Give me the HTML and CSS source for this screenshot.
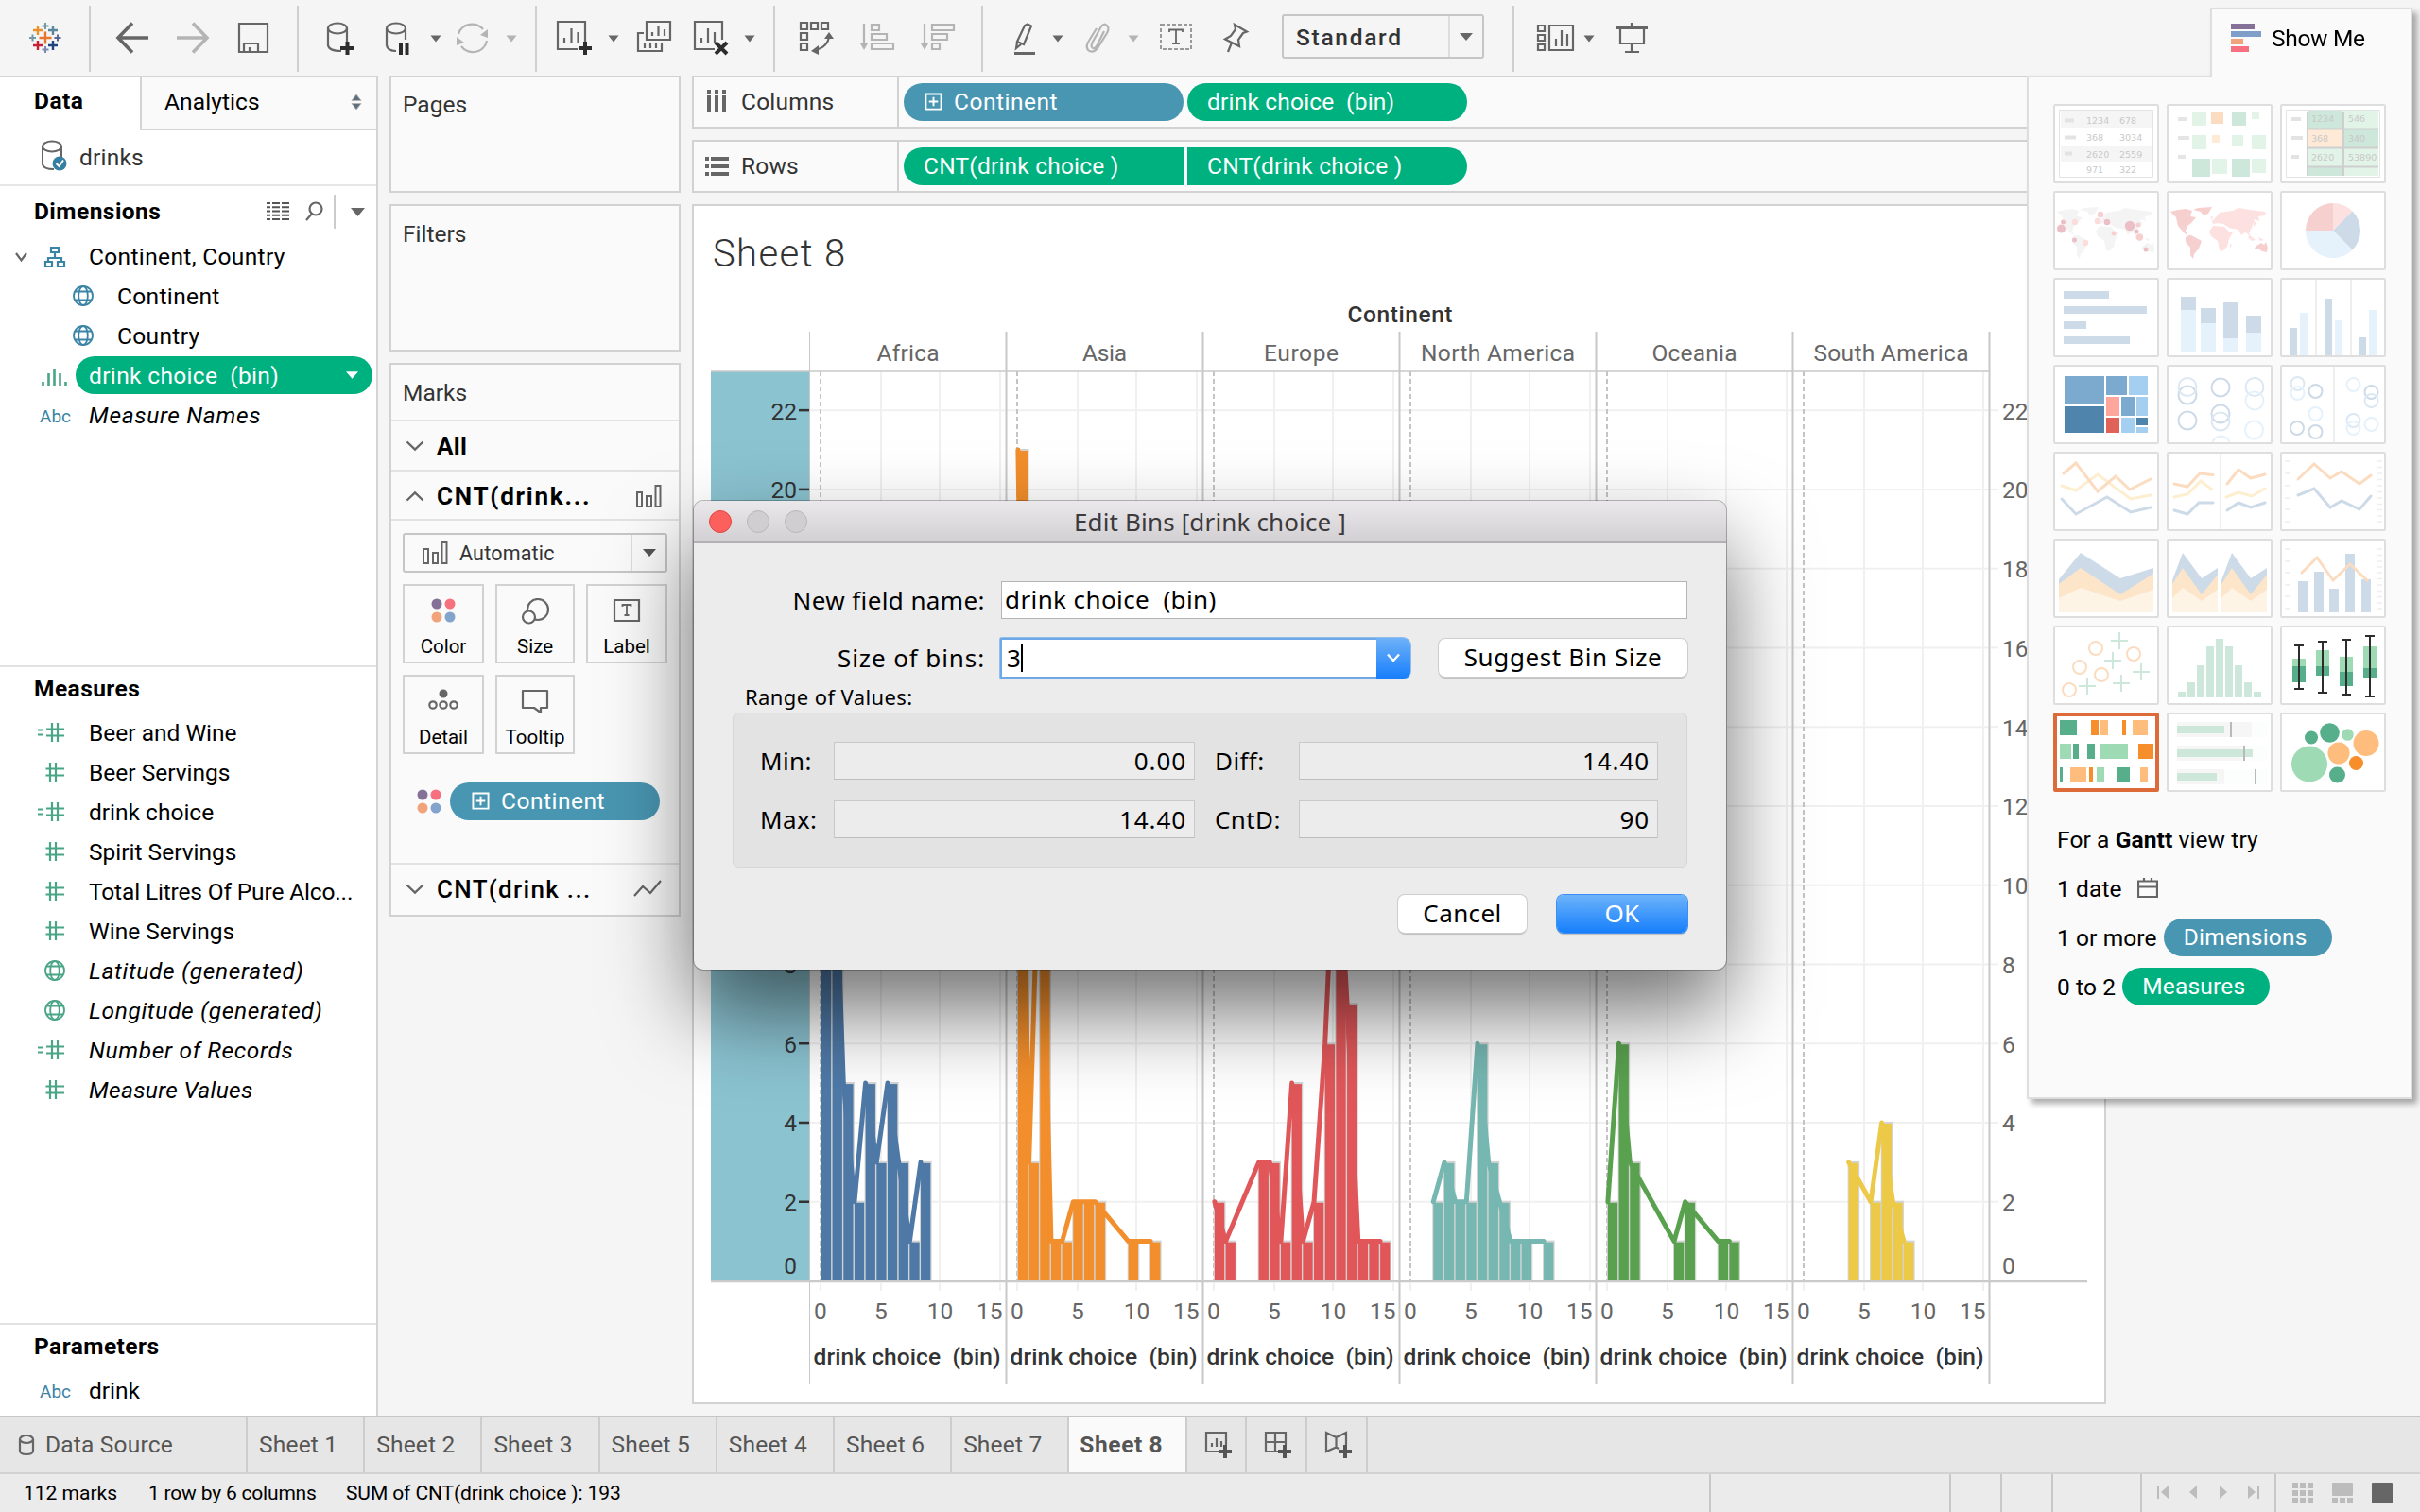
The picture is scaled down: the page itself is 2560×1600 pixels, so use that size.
FILE: index.html
```html
<!DOCTYPE html>
<html lang="en">
<head>
<meta charset="utf-8">
<title>Sheet 8</title>
<link rel="stylesheet" href="styles.css">
</head>
<body>
<svg class="defs" width="0" height="0">
  <defs>
    <symbol id="i-hash" viewBox="0 0 30 24"><path d="M13 2V22M19 2V22M8.500 8.500H28M8.500 15.500H28" fill="none" stroke="#4aa586" stroke-width="2.200"/></symbol>
    <symbol id="i-chash" viewBox="0 0 30 24"><path d="M15 2V22M21 2V22M9 8.500H28M9 15.500H28M0 9.500H6M0 14.500H6" fill="none" stroke="#4aa586" stroke-width="2.200"/></symbol>
    <symbol id="i-globe" viewBox="0 0 24 24"><g fill="none" stroke="currentColor" stroke-width="1.800"><circle cx="12" cy="12" r="10"/><ellipse cx="12" cy="12" rx="4.800" ry="10"/><path d="M3.500 7.500H20.500M3.500 16.500H20.500"/></g></symbol>
    <symbol id="i-plusbox" viewBox="0 0 20 20"><path d="M1.500 1.500H18.500V18.500H1.500ZM10 5V15M5 10H15" fill="none" stroke="#fff" stroke-width="2"/></symbol>
    <symbol id="i-colors" viewBox="0 0 26 26"><circle cx="6" cy="6" r="5.500" fill="#857098"/><circle cx="20" cy="6" r="5.500" fill="#f7707f"/><circle cx="6" cy="20" r="5.500" fill="#f1a47b"/><circle cx="20" cy="20" r="5.500" fill="#82a4cc"/></symbol>
    <symbol id="i-bars" viewBox="0 0 28 26"><path d="M2 9H7V24H2ZM12 13H17V24H12ZM21.500 2H26.500V24H21.500Z" fill="none" stroke="#666" stroke-width="2"/></symbol>
    <symbol id="i-down" viewBox="0 0 20 12"><path d="M1.500 1.500L10 9.500L18.500 1.500" fill="none" stroke="#666" stroke-width="2.400"/></symbol>
    <symbol id="i-tri" viewBox="0 0 14 8"><path d="M0 0H14L7 8Z" fill="currentColor"/></symbol>
    <symbol id="i-db" viewBox="0 0 26 36"><path d="M2 7V26Q3 31 14 31M22 7V22" fill="none" stroke="#666" stroke-width="2"/><ellipse cx="12" cy="7" rx="10" ry="5.500" fill="none" stroke="#666" stroke-width="2"/></symbol>
  </defs>
</svg>

<header class="toolbar">
  <svg class="tb sep" width="96" height="80" viewBox="0 0 96 80">
    <g fill="none" stroke-width="2">
      <path stroke="#7199a6" d="M48 24V31M44.500 27.500H51.500M34.500 36.500V43.500M31 40H38"/>
      <path stroke="#eb912b" stroke-width="2.400" d="M40 27V37M35 32H45"/>
      <path stroke="#59879b" stroke-width="2.400" d="M56 27V37M51 32H61"/>
      <path stroke="#e8762c" stroke-width="2.400" d="M48 33.500V46.500M41.500 40H54.500"/>
      <path stroke="#5b6591" d="M61 36.500V43.500M57.500 40H64.500"/>
      <path stroke="#c72035" stroke-width="2.400" d="M40 43V53M35 48H45"/>
      <path stroke="#1f457e" stroke-width="2.400" d="M56 43V53M51 48H61"/>
      <path stroke="#7c87b3" d="M48 49V56M44.500 52.500H51.500"/>
    </g>
  </svg>
  <svg class="tb sep" width="220" height="80" viewBox="96 0 220 80">
    <path class="ln4" d="M157 40H126M140 24.500L125 40L140 55.500"/>
    <path class="ln4 off" d="M187 40H218M204 24.500L219 40L204 55.500"/>
    <path class="ln" d="M253 25H283V55H253ZM258 55V46H273V55M264 55V50"/>
  </svg>
  <svg class="tb sep" width="252" height="80" viewBox="316 0 252 80">
    <ellipse class="ln" cx="357" cy="30" rx="10" ry="5.500"/><path class="ln" d="M347 30V48Q348 54 361 54M367 30V44"/><path class="blk" d="M367.500 44V58M360 51H375"/>
    <ellipse class="ln" cx="419" cy="30" rx="10" ry="5.500"/><path class="ln" d="M409 30V48Q410 54 419 54M429 30V42"/><path class="blk" d="M424 45V58M430.500 45V58"/>
    <path class="tri" d="M455.500 37.500H466.500L461 44.500Z"/>
    <path class="ln off" d="M485 36A15 14.500 0 0 1 511 31M515 43A15 14.500 0 0 1 488 49"/><path class="trioff" d="M508 37L516 31V40ZM483 39L491 45L483 48ZM535.500 37.500H546.500L541 44.500Z"/>
  </svg>
  <svg class="tb sep" width="252" height="80" viewBox="568 0 252 80">
    <path class="ln" d="M611 52H590V23H619V44M597 40V46M604.500 30V46M611.500 34V46"/><path class="blk" d="M619 44V58M612 51H626"/>
    <path class="tri" d="M643.500 37.500H654.500L649 44.500Z"/>
    <path class="ln" d="M684 23H709V42H684ZM690 34V38M696.500 28V38M703 31V38M681 35H675V54H700V46M682 46V51M688 46V51M694 46V51"/>
    <path class="ln" d="M756 52H735V23H764V42M742 40V46M749 30V46M756 34V46"/><path class="blk" d="M757 45L769 57M769 45L757 57"/>
    <path class="tri" d="M787.500 37.500H798.500L793 44.500Z"/>
  </svg>
  <svg class="tb sep" width="220" height="80" viewBox="820 0 220 80">
    <path class="ln" d="M847 24H854V31H847ZM858 24H865V31H858ZM869 24H876V31H869ZM847 35H854V42H847ZM847 46H854V53H847ZM862 53Q876 50 877 38"/><path class="tri" d="M872 41L877 34L882 41ZM866 48L858 54L866 58Z"/>
    <path class="ln off" d="M914 25V49M922 26H930V32H922ZM922 36H938V42H922ZM922 46H945V52H922Z"/><path class="trioff" d="M910 46H918L914 53Z"/>
    <path class="ln off" d="M978 25V49M986 26H1009V32H986ZM986 36H1002V42H986ZM986 46H994V52H986Z"/><path class="trioff" d="M974 46H982L978 53Z"/>
  </svg>
  <svg class="tb" width="316" height="80" viewBox="1040 0 316 80">
    <path class="ln" d="M1087 25.500L1091 27.500L1083 47L1076 44L1084 27ZM1076 45L1075 51L1080 47"/><path class="tri" d="M1073 55H1095V58H1073ZM1113.500 37.500H1124.500L1119 44.500Z"/>
    <path class="ln off" d="M1168 33L1160 49Q1157 53 1155 50Q1154 48 1156 44L1165 28Q1168 24 1171 27Q1174 30 1171 35L1161 51Q1156 57 1151 53Q1148 49 1152 43L1160 30"/><path class="trioff" d="M1193.500 37.500H1204.500L1199 44.500Z"/>
    <rect x="1228" y="26" width="32" height="26" fill="none" stroke="#999" stroke-width="2" stroke-dasharray="4 2"/><path class="ln s" d="M1237 34V31.500H1251V34M1244 31.500V46M1240 46H1248"/>
    <path class="ln" d="M1306 26L1319 33.500L1315 35L1310 42L1311 49L1296 41.500L1302 38L1307 31ZM1303 45L1299 55"/>
  </svg>
  <div class="fit"><span class="fit-t">Standard</span><span class="fit-a"><svg width="14" height="8"><use href="#i-tri"/></svg></span></div>
  <i class="vline"></i>
  <svg class="tb" width="158" height="80" viewBox="1602 0 158 80">
    <path class="ln" d="M1627 27H1634V33H1627ZM1627 37H1634V43H1627ZM1627 47H1634V53H1627ZM1639 27H1664V53H1639ZM1646 41V49M1652 32V49M1658 36V49"/>
    <path class="tri" d="M1675.500 37.500H1686.500L1681 44.500ZM1709 27H1743V31H1709Z"/>
    <path class="ln" d="M1714 31V46H1739V31M1726 24V28M1726 46V55M1719 55H1734"/>
  </svg>
</header>

<main class="main">
  <aside class="data">
    <div class="dtabs"><div class="dtab on">Data</div><div class="dtab off"><span>Analytics</span><svg width="12" height="16"><path d="M1 6.500H11L6 0ZM1 9.500H11L6 16Z" fill="#5c7080"/></svg></div></div>
    <div class="source">
      <svg width="30" height="36" viewBox="0 0 30 36"><use href="#i-db" width="26" height="36"/><circle cx="20" cy="25" r="7.500" fill="#357fa0"/><path d="M16.500 25L19.500 28L24 21.500" stroke="#fff" stroke-width="2" fill="none"/></svg>
      <span>drinks</span>
    </div>
    <section class="dims">
      <div class="shead"><b>Dimensions</b>
        <svg width="130" height="40" viewBox="270 204 130 40"><path d="M282 215H306M282 219.300H306M282 223.500H306M282 227.800H306M282 232H306" stroke="#555" stroke-width="2" stroke-dasharray="4 2 8 2 8 9"/><circle cx="334" cy="221" r="6.500" class="ln"/><path class="ln" d="M330 226L324 233"/><path d="M354 206V242" stroke="#ccc" stroke-width="2"/><path class="tri" d="M371 220H386L378.500 229Z"/></svg>
      </div>
      <div class="row"><svg class="ic" width="94" height="42" viewBox="0 251 94 42"><path class="ln" d="M17 269L22.500 276.500L28 269"/><path d="M54 263H62V268H54ZM58 268V274M51 278V274H65V278M48 278H55V283H48ZM61 278H68V283H61Z" fill="none" stroke="#3a84a5" stroke-width="2.200"/></svg><span>Continent, Country</span></div>
      <div class="row in"><svg class="ic globe" width="24" height="24"><use href="#i-globe"/></svg><span>Continent</span></div>
      <div class="row in"><svg class="ic globe" width="24" height="24"><use href="#i-globe"/></svg><span>Country</span></div>
      <div class="row sel"><svg class="ic" width="80" height="42" viewBox="0 0 80 42"><path d="M45.500 28V32M51.500 19V32M57.500 14V32M63.500 19V32M69.500 28V32" stroke="#4aa586" stroke-width="2.600"/></svg><div class="pill g selpill"><span>drink choice  (bin)</span><svg width="13" height="8"><use href="#i-tri"/></svg></div></div>
      <div class="row"><span class="abc">Abc</span><em>Measure Names</em></div>
    </section>
    <section class="meas">
      <div class="shead"><b>Measures</b></div>
      <div class="row"><svg class="mi" width="30" height="24"><use href="#i-chash"/></svg><span>Beer and Wine</span></div>
      <div class="row"><svg class="mi" width="30" height="24"><use href="#i-hash"/></svg><span>Beer Servings</span></div>
      <div class="row"><svg class="mi" width="30" height="24"><use href="#i-chash"/></svg><span>drink choice</span></div>
      <div class="row"><svg class="mi" width="30" height="24"><use href="#i-hash"/></svg><span>Spirit Servings</span></div>
      <div class="row"><svg class="mi" width="30" height="24"><use href="#i-hash"/></svg><span class="tight">Total Litres Of Pure Alco...</span></div>
      <div class="row"><svg class="mi" width="30" height="24"><use href="#i-hash"/></svg><span>Wine Servings</span></div>
      <div class="row"><svg class="mi gg" width="24" height="24"><use href="#i-globe"/></svg><em>Latitude (generated)</em></div>
      <div class="row"><svg class="mi gg" width="24" height="24"><use href="#i-globe"/></svg><em>Longitude (generated)</em></div>
      <div class="row"><svg class="mi" width="30" height="24"><use href="#i-chash"/></svg><em>Number of Records</em></div>
      <div class="row"><svg class="mi" width="30" height="24"><use href="#i-hash"/></svg><em class="mv">Measure Values</em></div>
    </section>
    <section class="params">
      <div class="shead"><b>Parameters</b></div>
      <div class="row"><span class="abc">Abc</span><span>drink</span></div>
    </section>
  </aside>

  <div class="cards">
    <div class="card pages">Pages</div>
    <div class="card filters">Filters</div>
    <div class="card marks">
      <div class="m-title">Marks</div>
      <div class="m-row all"><svg width="20" height="12"><use href="#i-down"/></svg><b>All</b></div>
      <div class="m-row one"><svg class="flip" width="20" height="12"><use href="#i-down"/></svg><b>CNT(drink...</b><svg class="kind" width="28" height="26"><use href="#i-bars"/></svg></div>
      <div class="m-body">
        <div class="auto"><svg width="28" height="26"><use href="#i-bars"/></svg><span>Automatic</span><i><svg width="14" height="8"><use href="#i-tri"/></svg></i></div>
        <div class="btns">
          <div class="btn"><svg width="26" height="26"><use href="#i-colors"/></svg>Color</div>
          <div class="btn"><svg width="30" height="28" viewBox="0 0 30 28"><circle class="ln" cx="18" cy="12" r="11"/><circle class="ln" cx="8.500" cy="20" r="6.500" style="fill:#fafafa"/></svg>Size</div>
          <div class="btn"><svg width="30" height="26" viewBox="0 0 30 26"><path class="ln" d="M2 2H28V24H2Z"/><path class="ln s" d="M10.500 9V7H19.500V9M15 7V18M12.500 18H17.500"/></svg>Label</div>
          <div class="btn"><svg width="32" height="22" viewBox="0 0 32 22"><circle cx="16" cy="5" r="4.500" fill="#666"/><circle class="ln" cx="5" cy="17" r="3.700"/><circle class="ln" cx="16" cy="17" r="3.700"/><circle class="ln" cx="27" cy="17" r="3.700"/></svg>Detail</div>
          <div class="btn"><svg width="30" height="28" viewBox="0 0 30 28"><path class="ln" d="M2 2H28V20H21V25L14 20H2Z" stroke-linejoin="round"/></svg>Tooltip</div>
        </div>
        <div class="enc"><svg width="26" height="26"><use href="#i-colors"/></svg><div class="pill b"><svg width="19" height="19"><use href="#i-plusbox"/></svg><span>Continent</span></div></div>
      </div>
      <div class="m-row last"><svg width="20" height="12"><use href="#i-down"/></svg><b>CNT(drink ...</b><svg class="kind" width="30" height="20" viewBox="0 0 30 20"><path class="ln" d="M1 17L10 7L18 14L29 1"/></svg></div>
    </div>
  </div>

  <div class="work">
    <div class="shelf"><div class="sh-name"><svg width="24" height="26"><path d="M4 0V4M12 0V4M20 0V4M4 6V24M12 6V24M20 6V24" stroke="#666" stroke-width="4"/></svg><span>Columns</span></div><div class="pills"><div class="pill b"><svg width="19" height="19"><use href="#i-plusbox"/></svg><span>Continent</span></div><div class="pill g"><span>drink choice  (bin)</span></div></div></div>
    <div class="shelf"><div class="sh-name"><svg width="26" height="22"><path d="M0 3H4M0 11H4M0 19H4M6 3H25M6 11H25M6 19H25" stroke="#666" stroke-width="4"/></svg><span>Rows</span></div><div class="pills"><div class="pill g sqr"><span>CNT(drink choice )</span></div><div class="pill g sql"><span>CNT(drink choice )</span></div></div></div>
    <div class="view"><h1>Sheet 8</h1><svg id="chart" width="1492" height="1164" viewBox="734 320 1492 1164"></svg></div>
  </div>
</main>

<nav class="tabs">
  <div class="tab ds"><svg width="18" height="24" viewBox="0 0 18 24"><path class="ln" d="M2 6V18Q2 22 9 22Q16 22 16 18V6"/><ellipse class="ln" cx="9" cy="6" rx="7" ry="4"/></svg>Data Source</div>
  <div class="tab">Sheet 1</div><div class="tab">Sheet 2</div><div class="tab">Sheet 3</div><div class="tab">Sheet 5</div><div class="tab">Sheet 4</div><div class="tab">Sheet 6</div><div class="tab">Sheet 7</div><div class="tab cur">Sheet 8</div>
  <div class="tab new"><svg width="30" height="32" viewBox="0 0 30 32"><path class="ln" d="M16 23H2V3H23V16M8 14V18M13 9V18M18 12V18"/><path d="M22 16V30M15 23H29" stroke="#555" stroke-width="4"/></svg></div>
  <div class="tab new"><svg width="30" height="32" viewBox="0 0 30 32"><path class="ln" d="M16 23H2V3H23V16M2 13H23M12 3V23"/><path d="M22 16V30M15 23H29" stroke="#555" stroke-width="4"/></svg></div>
  <div class="tab new"><svg width="30" height="32" viewBox="0 0 30 32"><path class="ln" d="M15 20L12.500 18.500L2 23V3L12.500 8L23 3V16M12.500 8V19"/><path d="M22 16V30M15 23H29" stroke="#555" stroke-width="4"/></svg></div>
</nav>
<footer class="status">
  <span class="s1">112 marks</span><span class="s2">1 row by 6 columns</span><span class="s3">SUM of CNT(drink choice ): 193</span>
  <svg width="754" height="40" viewBox="1806 1560 754 40"><path d="M1809 1560V1600M2063 1560V1600M2117 1560V1600M2171 1560V1600M2265 1560V1600M2407 1560V1600" stroke="#c8c8c8" stroke-width="2"/><path fill="#bcbcbc" d="M2282 1572H2284V1586H2282ZM2294 1572V1586L2286 1579ZM2324 1572V1586L2316 1579ZM2348 1572V1586L2356 1579ZM2378 1572V1586L2386 1579ZM2388 1572H2390V1586H2388Z"/><path d="M2425 1572H2431M2433 1572H2439M2441 1572H2447M2425 1580H2431M2433 1580H2439M2441 1580H2447M2425 1588H2431M2433 1588H2439M2441 1588H2447M2467 1588H2473M2475 1588H2481M2483 1588H2489" stroke="#bcbcbc" stroke-width="6"/><rect x="2467" y="1569" width="22" height="14" rx="1" fill="#bcbcbc"/><rect x="2509" y="1569" width="22" height="22" rx="1" fill="#666"/></svg>
</footer>

<section class="showme">
  <div class="sm-tab"><svg width="32" height="30"><path fill="#857098" d="M0 0H25V6H0Z"/><path fill="#7f9fca" d="M0 8H32V14H0Z"/><path fill="#f1a47b" d="M0 16H13V22H0Z"/><path fill="#f7707f" d="M0 24H19V30H0Z"/></svg><span>Show Me</span></div>
  <div class="sm-body">
    <div class="thumbs">
      <svg class="th"><path fill="#f5f5f5" d="M8 7H104V25H8ZM8 44H104V61H8Z"/><path fill="none" stroke="#e3e3e3" d="M6.500 6.500H105.500V77.500H6.500Z"/><path stroke="#e3e3e3" stroke-width="4" d="M12 17.500H22M12 35.500H24M12 52.500H20"/><g class="tt"><text x="35" y="20.500">1234</text><text x="70" y="20.500">678</text><text x="35" y="38.500">368</text><text x="70" y="38.500">3034</text><text x="35" y="56.500">2620</text><text x="70" y="56.500">2559</text><text x="35" y="72.500">971</text><text x="70" y="72.500">322</text></g></svg>
      <svg class="th"><path stroke="#e5e5e5" stroke-width="4" d="M12 16H22M12 36H24M12 56H20"/><path fill="#e2f3e8" d="M27 8H42V23H27ZM90 8H98V16H90ZM27 33H42V48H27ZM69 33H81V45H69ZM90 33H105V48H90ZM48 58H64V74H48ZM90 58H105V73H90Z"/><path fill="#cde7da" d="M69 8H84V23H69ZM27 58H46V77H27ZM69 58H88V77H69Z"/><path fill="#fbdcc0" d="M47 8H60V21H47Z"/><path fill="#feead6" d="M48 33H56V41H48Z"/></svg>
      <svg class="th"><path fill="none" stroke="#e3e3e3" d="M6.500 6.500H105.500V77.500H6.500Z"/><path stroke="#e3e3e3" stroke-width="4" d="M12 16H22M12 36H24M12 56H20"/><path fill="#e2f3e8" d="M29 7H104V76H29Z"/><path fill="#cde7da" d="M29 7H66V26H29ZM67 27H104V46H67ZM29 67H66V76H29Z"/><path fill="#feead6" d="M29 27H66V46H29Z"/><path stroke="#cfcfcf" stroke-width="2" d="M29 8V76M67 8V76M29 26.500H104M29 46.500H104M29 66.500H104"/><g class="tt"><text x="33" y="19">1234</text><text x="72" y="19">546</text><text x="33" y="40">368</text><text x="72" y="40">340</text><text x="33" y="60">2620</text><text x="72" y="60">53890</text></g></svg>
      <svg class="th"><g fill="#f4f4f4"><path id="na" d="M4 22L12 20L20 19L27 21L25 27L31 28L26 34L22 37L20 42L22 47L28 48L24 49L18 44L12 37L10 28ZM33 18L48 17L44 24L39 26L36 22L28 20Z"/><path id="sa" d="M20 49L26 47L37 53L34 61L29 67L28 72L25 68L25 60L20 54Z"/><path id="ea" d="M48 32L52 28L56 23L62 22L70 21L76 18L88 20L104 22L105 26L97 27L98 32L93 30L91 36L89 41L87 44L89 49L84 44L81 45L79 47L76 41L71 40L66 39L60 35L54 34L49 35ZM92 32L95 34L92 38ZM88 47L94 52L90 53L86 49ZM97 49L103 52L99 53ZM46 28L49 27L48 31Z"/><path id="af" d="M45 43L49 37L61 38L66 43L70 44L66 51L64 59L59 64L56 63L54 53L47 48ZM67 56L69 57L67 61Z"/><path id="au" d="M92 62L95 58L100 55L103 57L105 54L107 60L106 65L101 64L98 62Z"/></g><g fill="#ebbfc5"><circle cx="8.500" cy="40" r="4.500"/><circle cx="10.500" cy="33" r="2.500"/><circle cx="57" cy="33" r="3.300"/><circle cx="81" cy="37" r="5.200"/><circle cx="22.500" cy="52" r="2.500"/><circle cx="88" cy="43" r="2.500"/><circle cx="98" cy="62" r="2.500"/></g><g fill="#f7cfcf"><circle cx="50" cy="25" r="3.200"/><circle cx="91.500" cy="49" r="3.700"/><circle cx="90" cy="36" r="2.500"/><circle cx="64" cy="45" r="2.400"/></g><g fill="#fddcdc"><circle cx="23" cy="33" r="3.200"/><circle cx="47" cy="32" r="3.300"/><circle cx="34" cy="55" r="3.200"/></g></svg>
      <svg class="th"><g fill="#f6d0cf"><use href="#na"/><use href="#sa"/><use href="#au"/></g><g fill="#fde0e0"><use href="#ea"/><use href="#af"/></g></svg>
      <svg class="th"><path fill="#fde0e0" d="M56 42V13A29 29 0 0 1 76.500 21.500Z"/><path fill="#cddae8" d="M56 42L76.500 21.500A29 29 0 0 1 76.500 62.500Z"/><path fill="#e5f1fb" d="M56 42L76.500 62.500A29 29 0 0 1 27 42Z"/><path fill="#f6d0cf" d="M56 42H27A29 29 0 0 1 56 13Z"/></svg>
      <svg class="th"><path fill="#cddae8" d="M11 14H59V22H11ZM11 30H99V38H11ZM11 46H35V54H11ZM11 62H81V70H11Z"/></svg>
      <svg class="th"><path fill="#e5f1fb" d="M15 34H31V78H15ZM36 48H52V78H36ZM60 64H76V78H60ZM84 58H100V78H84Z"/><path fill="#cddae8" d="M15 20H31V34H15ZM36 32H52V48H36ZM60 26H76V64H60ZM84 40H100V58H84Z"/></svg>
      <svg class="th"><path stroke="#eee" stroke-width="2" d="M38 0V84M75 0V84"/><path fill="#cddae8" d="M10 53H18V84H10ZM47 22H55V84H47ZM83 63H91V84H83Z"/><path fill="#e5f1fb" d="M21 37H29V84H21ZM58 45H66V84H58ZM94 34H102V84H94Z"/></svg>
      <svg class="th"><path fill="#7baace" d="M12 12H54V42H12ZM56 12H78V32H56ZM72 34H86V54H72Z"/><path fill="#4f84ad" d="M12 44H54V72H12ZM88 56H100V64H88Z"/><path fill="#a5cff0" d="M80 12H100V32H80ZM88 34H100V54H88ZM72 56H86V72H72ZM88 66H100V72H88Z"/><path fill="#fea59c" d="M56 34H70V54H56Z"/><path fill="#e16259" d="M56 56H70V72H56Z"/></svg>
      <svg class="th"><g fill="none" stroke-width="2" stroke="#cddae8"><circle cx="22" cy="32" r="9.500"/><circle cx="22" cy="59" r="9.500"/><circle cx="57" cy="24" r="9.500"/><circle cx="57" cy="52" r="9.500"/></g><g fill="none" stroke-width="2" stroke="#dce8f3"><circle cx="22" cy="23.500" r="9.500"/><circle cx="57" cy="60" r="9.500"/><circle cx="93" cy="23.500" r="9.500"/></g><g fill="none" stroke-width="2" stroke="#e5f1fb"><circle cx="93" cy="38" r="9.500"/><circle cx="92.500" cy="69" r="9.500"/><circle cx="57.500" cy="85" r="9.500"/></g></svg>
      <svg class="th"><path stroke="#eee" stroke-width="2" d="M57 0V84"/><g fill="none" stroke-width="2" stroke="#cddae8"><circle cx="37.500" cy="28" r="7"/><circle cx="37.500" cy="71" r="7"/><circle cx="96.500" cy="29" r="7"/><circle cx="18" cy="67" r="7"/></g><g fill="none" stroke-width="2" stroke="#dce8f3"><circle cx="18.500" cy="20" r="7"/><circle cx="96.500" cy="38" r="7"/><circle cx="77.500" cy="59" r="7"/></g><g fill="none" stroke-width="2" stroke="#e5f1fb"><circle cx="18.500" cy="30" r="7"/><circle cx="37.500" cy="52" r="7"/><circle cx="77.500" cy="21" r="7"/><circle cx="77.500" cy="67" r="7"/><circle cx="96.500" cy="63" r="7"/></g></svg>
      <svg class="th tl"><path stroke="#fdeecf" d="M9 36L24 41L47 24L82 50L103 46"/><path stroke="#fbdcc0" d="M11 23L24 12L47 42L66 26L81 40L103 29"/><path stroke="#cddae8" d="M9 50L24 66L57 48L82 64L103 59"/></svg>
      <svg class="th tl"><path stroke="#eee" stroke-width="2" d="M57 0V84"/><path stroke="#fdeecf" d="M8 48L22 45L36 31L48 40M63 48L76 43L90 47L104 39"/><path stroke="#fbdcc0" d="M8 34L22 37L35 23L49 24.500M64 34L76 19L89 28L104 24"/><path stroke="#cddae8" d="M8 62L22 66L34 54H49M64 62L76 54L89 59L104 54"/></svg>
      <svg class="th tl"><path class="tk" d="M5 10H11M5 23H11M5 36H11M5 49H11M5 61H11M5 74H11M102 10H108M102 16.500H108M102 23H108M102 29.500H108M102 36H108M102 42.500H108M102 49H108M102 55.500H108M102 61.500H108M102 68H108M102 74H108"/><path stroke="#fbdcc0" d="M19 29L36 13L53 28L65 21L84 34L96 25"/><path stroke="#cddae8" d="M19 46L36 39L53 59L65 52L84 61L96 47"/></svg>
      <svg class="th"><path fill="#cddae8" d="M6 43L29 15L71 42L106 31V78H6Z"/><path fill="#fde5ca" d="M6 48L29 31L71 59L106 37V78H6Z"/><path fill="#fef4e6" d="M6 63L29 52L71 66L106 54V78H6Z"/></svg>
      <svg class="th"><path fill="#cddae8" d="M6 44L17 15L37 42L54 31V78H6ZM58 44L69 15L89 42L106 31V78H58Z"/><path fill="#fde5ca" d="M6 48L17 31L37 59L54 38V78H6ZM58 48L69 31L89 59L106 38V78H58Z"/><path fill="#fef4e6" d="M6 63L17 52L37 66L54 54V78H6ZM58 63L69 52L89 66L106 54V78H58Z"/></svg>
      <svg class="th tl"><path class="tk" d="M5 11H11M5 24H11M5 36H11M5 49H11M5 61H11M5 74H11M102 11H108M102 17.500H108M102 24H108M102 30H108M102 36H108M102 42.500H108M102 49H108M102 55.500H108M102 61.500H108M102 68H108M102 74H108"/><path fill="#cddae8" stroke="none" d="M19 45H29V78H19ZM36 35H46V78H36ZM52 53H62V78H52ZM69 16H79V78H69ZM86 43H96V78H86Z"/><path stroke="#fbdcc0" d="M23 36L39 20L56 44L74 27L92 44"/></svg>
      <svg class="th"><g fill="none" stroke="#fbdcc0" stroke-width="2"><circle cx="45" cy="24" r="7"/><circle cx="85" cy="30" r="7"/><circle cx="28" cy="44" r="7"/><circle cx="51" cy="52" r="7"/><circle cx="17" cy="68" r="7"/></g><path stroke="#cde7da" stroke-width="2" d="M61 16H79M70 7V25M54 37H72M63 28V46M84 49H102M93 40V58M63 61H81M72 52V70M27 64H45M36 55V73"/></svg>
      <svg class="th"><path fill="#cde7da" d="M12 70H20V76H12ZM22 60H30V76H22ZM32 42H40V76H32ZM42 22H50V76H42ZM52 14H60V76H52ZM62 22H70V76H62ZM72 42H80V76H72ZM82 60H90V76H82ZM92 70H100V76H92Z"/></svg>
      <svg class="th"><path fill="#9edbb5" d="M13 35H27V43H13ZM38 26H52V43H38ZM63 33H77V49H63ZM88 22H102V45H88Z"/><path fill="#57ae8a" d="M13 43H27V60H13ZM38 43H52V53H38ZM63 49H77V64H63ZM88 45H102V55H88Z"/><path stroke="#2d2d2d" stroke-width="2" d="M20 21V67M15 21H25M15 67H25M45 17V71M40 17H50M40 71H50M70 15V73M65 15H75M65 73H75M95 11V75M90 11H100M90 75H100"/></svg>
      <svg class="th act"><path fill="#57ae8a" d="M7 8H25V24H7ZM21 33H27V49H21ZM36 33H44V49H36ZM7 58H10V74H7ZM67 58H81V74H67Z"/><path fill="#f58e2b" d="M40 8H48V24H40ZM73 8H77V24H73ZM90 33H106V49H90ZM38 58H42V74H38Z"/><path fill="#febd7d" d="M50 8H58V24H50ZM84 8H100V24H84ZM18 58H35V74H18ZM92 58H100V74H92Z"/><path fill="#9edbb5" d="M7 33H19V49H7ZM50 33H79V49H50ZM46 58H54V74H46Z"/></svg>
      <svg class="th"><path fill="#fcfdfd" d="M11 10H106V26H11ZM11 35H106V51H11ZM11 60H106V76H11Z"/><path fill="#f6f6f6" d="M11 10H90V26H11ZM11 35H80V51H11ZM11 60H61V76H11Z"/><path fill="#cde7da" d="M11 14H61V22H11ZM11 39H91V47H11ZM11 64H53V72H11Z"/><path stroke="#b9b9b9" stroke-width="2" d="M68 10V26M82 35V51M94 60V76"/></svg>
      <svg class="th"><g fill="#57ae8a"><circle cx="33" cy="26.500" r="7"/><circle cx="52.500" cy="21.500" r="10.300"/><circle cx="60.500" cy="66" r="8.500"/></g><g fill="#9edbb5"><circle cx="31" cy="54.500" r="19"/><circle cx="71.500" cy="23.500" r="6.300"/></g><g fill="#febd7d"><circle cx="91" cy="32.500" r="13.500"/><circle cx="62" cy="43" r="11.500"/></g><circle cx="80.500" cy="53.500" r="7.500" fill="#f58e2b"/></svg>
    </div>
    <div class="hint h1">For a <b>Gantt</b> view try</div>
    <div class="hint">1 date <svg width="22" height="22" viewBox="0 0 22 22"><path class="ln" d="M1 3.500H21V20H1ZM1 9.500H21M7 0V4M15 0V4"/></svg></div>
    <div class="hint">1 or more <span class="pill b">Dimensions</span></div>
    <div class="hint">0 to 2 <span class="pill g">Measures</span></div>
  </div>
</section>

<section class="dialog">
  <div class="d-title"><i class="red"></i><i></i><i></i><span>Edit Bins [drink choice ]</span></div>
  <div class="d-body">
    <div class="f-row name"><label>New field name:</label><div class="inp">drink choice  (bin)</div></div>
    <div class="f-row size"><label>Size of bins:</label><div class="combo"><div class="c-in">3<i></i></div><div class="c-btn"><svg width="16" height="10"><path d="M2 1.500L8 8L14 1.500" fill="none" stroke="#fff" stroke-width="2.400"/></svg></div></div><div class="mbtn sug">Suggest Bin Size</div></div>
    <div class="range-l">Range of Values:</div>
    <div class="range">
      <label>Min:</label><div class="ro">0.00</div><label class="c2">Diff:</label><div class="ro">14.40</div>
      <label>Max:</label><div class="ro">14.40</div><label class="c2">CntD:</label><div class="ro">90</div>
    </div>
    <div class="d-foot"><div class="mbtn cancel">Cancel</div><div class="mbtn ok">OK</div></div>
  </div>
</section>
<script src="chart.js"></script>
</body>
</html>
```
FILE: styles.css
```css
* { box-sizing: border-box; }
html, body { margin: 0; padding: 0; }
body { width: 2560px; height: 1600px; overflow: hidden; position: relative; background: #f5f5f5; font-family: Roboto, "Liberation Sans", sans-serif; font-size: 24.5px; color: #000; display: flex; flex-direction: column; white-space: nowrap; }
svg { display: block; flex: none; }
.defs { position: absolute; }
em { font-style: italic; }

.ln { fill: none; stroke: #666; stroke-width: 2.2; }
.ln.s { stroke-width: 1.8; }
.ln4 { fill: none; stroke: #666; stroke-width: 3.6; }
.off { stroke: #b4b4b4; }
.blk { fill: none; stroke: #2d2d2d; stroke-width: 4; }
.tri { fill: #666; }
.trioff { fill: #b4b4b4; }

/* toolbar */
.toolbar { height: 80px; display: flex; align-items: flex-start; flex: none; }
.sep { background: linear-gradient(#cfcfcf, #cfcfcf) right 0 top 6px / 2px 70px no-repeat; }
.fit { width: 214px; height: 47px; margin-top: 15px; border: 2px solid #c6c6c6; border-radius: 3px; display: flex; align-items: center; color: #333; font-weight: 500; letter-spacing: 1.7px; }
.fit-t { flex: 1; padding-left: 13px; padding-top: 1px; }
.fit-a { width: 36px; height: 43px; border-left: 2px solid #ddd; display: flex; align-items: center; justify-content: center; color: #666; }
.vline { width: 2px; height: 70px; margin: 6px 0 0 30px; background: #cfcfcf; }

/* pills */
.pill { height: 40px; border-radius: 20px; color: #fff; display: flex; align-items: center; white-space: pre; letter-spacing: .2px; padding-bottom: 1px; }
.pill.g { background: #00b180; }
.pill.b { background: #4996b2; }

/* data pane */
.main { flex: none; height: 1418px; display: flex; }
.data { width: 400px; background: #fff; border-top: 2px solid #d4d4d4; border-right: 2px solid #d4d4d4; display: flex; flex-direction: column; }
.dtabs { display: flex; height: 56px; flex: none; line-height: 50px; }
.dtab.on { width: 148px; padding-left: 36px; font-weight: 700; letter-spacing: .5px; }
.dtab.off { flex: 1; background: #fafafa; border-left: 2px solid #d4d4d4; border-bottom: 2px solid #d4d4d4; padding: 0 15px 2px 24px; display: flex; align-items: center; justify-content: space-between; letter-spacing: .1px; }
.source { height: 59px; flex: none; border-bottom: 2px solid #e6e6e6; display: flex; align-items: center; padding: 0 0 1px 43px; gap: 11px; color: #333; letter-spacing: .2px; }
.shead { height: 54px; display: flex; align-items: center; justify-content: space-between; padding-left: 36px; letter-spacing: .45px; }
.shead svg { margin-right: -2px; }
.dims { height: 507px; }
.dims .shead { height: 53px; }
.dims .row span { letter-spacing: .35px; }
.meas { height: 696px; border-top: 2px solid #e2e2e2; }
.params { border-top: 2px solid #e2e2e2; }
.meas .shead, .params .shead { height: 48px; padding-bottom: 3px; }
.row { height: 42px; display: flex; align-items: center; }
.row em { letter-spacing: .65px; }
.row em.mv { letter-spacing: .3px; }
.row .tight { letter-spacing: -.15px; }
.row.in { padding-left: 76px; gap: 24px; }
.globe { color: #3a84a5; }
.gg { color: #4aa586; }
.selpill { width: 314px; padding: 0 15px 0 14px; justify-content: space-between; }
.abc { width: 94px; padding-left: 42px; font-size: 19px; color: #3a84a5; padding-top: 3px; }
.dims .row .abc { letter-spacing: 0; }
.mi { margin-left: 40px; width: 30px; margin-right: 24px; }
.mi.gg { margin-left: 46px; width: 24px; }

/* cards */
.cards { width: 308px; margin-left: 12px; color: #333; }
.card { background: #fafafa; border: 2px solid #d2d2d2; }
.pages { height: 124px; margin-bottom: 12px; padding: 12px 12px; line-height: 34px; }
.filters { height: 156px; margin-bottom: 12px; padding: 13px 12px; line-height: 34px; }
.marks { height: 586px; }
.m-title { height: 59px; padding-left: 12px; line-height: 59px; border-bottom: 1px solid #e2e2e2; }
.m-row { display: flex; align-items: center; padding: 0 18px 0 15px; border-bottom: 2px solid #e2e2e2; color: #000; font-size: 26px; }
.m-row b { margin-left: 13px; flex: 1; font-weight: 500; letter-spacing: 1.3px; }
.m-row.one b { font-weight: 700; letter-spacing: 1.75px; }
.m-row.all { height: 54px; padding-top: 1px; }
.m-row.all b { font-weight: 700; letter-spacing: .3px; }
.m-row.one { height: 52px; padding-top: 2px; }
.m-row.last { height: 51px; border-bottom: 0; }
.flip { transform: scaleY(-1); }
.m-body { height: 364px; border-bottom: 2px solid #e2e2e2; padding: 13px 12px 0; }
.auto { height: 42px; border: 2px solid #c6c6c6; border-radius: 3px; display: flex; align-items: center; padding-left: 18px; gap: 12px; font-size: 21.500px; }
.auto span { flex: 1; letter-spacing: .2px; }
.auto i { width: 37px; height: 38px; border-left: 2px solid #ddd; display: flex; align-items: center; justify-content: center; color: #555; }
.btns { display: grid; grid-template-columns: 86px 84px 86px; column-gap: 12px; row-gap: 12px; margin-top: 12px; }
.btn { height: 84px; border: 2px solid #d2d2d2; display: flex; flex-direction: column; align-items: center; justify-content: space-between; padding: 13px 0 3px; font-size: 20.500px; line-height: 26px; color: #000; }
.enc { display: flex; align-items: center; gap: 9px; padding-left: 15px; margin-top: 30px; }
.enc .pill { width: 222px; padding-left: 23px; gap: 12px; letter-spacing: .5px; }

/* worksheet */
.work { width: 1496px; margin-left: 12px; }
.shelf { height: 56px; margin-bottom: 12px; border: 2px solid #d2d2d2; background: #fafafa; display: flex; color: #333; }
.sh-name { width: 217px; border-right: 2px solid #d2d2d2; display: flex; align-items: center; padding-left: 12px; padding-bottom: 1px; }
.sh-name span { margin-left: 12px; letter-spacing: .2px; }
.sh-name svg { width: 26px; }
.pills { display: flex; gap: 4px; padding: 6px 0 0 5px; }
.pills .pill { width: 296px; padding-left: 21px; }
.pills .pill.b { padding-left: 22px; gap: 12px; letter-spacing: .5px; }
.pills .pill.sqr { border-radius: 20px 0 0 20px; }
.pills .pill.sql { border-radius: 0 20px 20px 0; }
.view { height: 1270px; background: #fff; border: 2px solid #d2d2d2; }
h1 { margin: 0; height: 102px; padding: 26px 0 0 20px; font-size: 40px; line-height: 50px; font-weight: 300; color: #333; letter-spacing: 1.4px; }
.c-lab { fill: #666; font-size: 24.500px; }
.c-dark { fill: #333; }
.c-bold { fill: #333; font-size: 24.500px; font-weight: 500; white-space: pre; }

/* sheet tabs, status bar */
.tabs { height: 62px; flex: none; background: #e6e6e6; border-top: 1px solid #c6c6c6; border-bottom: 2px solid #d2d2d2; display: flex; color: #555; }
.tab { width: 124.200px; border-right: 2px solid #cdcdcd; padding-left: 12px; line-height: 60px; letter-spacing: .2px; }
.tab.ds { width: 262px; padding-left: 19px; display: flex; align-items: center; gap: 11px; }
.tab.cur { background: #fafafa; font-weight: 700; letter-spacing: .6px; padding-left: 11px; }
.tab.new { width: 63.700px; display: flex; align-items: center; padding-left: 18px; }
.status { height: 40px; flex: none; background: #ebebeb; display: flex; font-size: 21px; line-height: 40px; }
.s1 { width: 132px; padding-left: 0; margin-left: 25px; }
.s2 { width: 209px; letter-spacing: -.2px; }
.s3 { flex: 1; letter-spacing: -.1px; }

/* show me */
.showme { position: absolute; left: 2144px; top: 8px; width: 408px; height: 1155px; filter: drop-shadow(5px 5px 3px rgba(0, 0, 0, .32)); }
.sm-tab { width: 214px; height: 74px; margin-left: auto; background: #fafafa; border: 2px solid #dedede; border-bottom: 0; position: relative; z-index: 1; display: flex; padding: 15px 0 0 20px; gap: 11px; line-height: 32px; letter-spacing: -.3px; }
.sm-body { height: 1083px; margin-top: -2px; background: #fafafa; border: 2px solid #dedede; padding: 28px 0 0 26px; }
.thumbs { display: grid; grid-template-columns: repeat(3, 112px); gap: 8px; }
.th { width: 112px; height: 84px; background: #fff; outline: 2px solid #dedede; outline-offset: -2px; border-radius: 2px; }
.th.act { outline: 4px solid #dc6b39; outline-offset: -4px; }
.tl { fill: none; stroke-width: 3; }
.tl path { stroke-linecap: round; }
.tl .tk { stroke: #eee; stroke-width: 1.6; stroke-linecap: butt; }
.tt { font-family: "DejaVu Sans", sans-serif; font-size: 9.500px; fill: #c9c9c9; }
.hint { height: 52px; padding-left: 4px; display: flex; align-items: center; white-space: pre; letter-spacing: .1px; }
.hint.h1 { margin-top: 24px; height: 52px; }
.hint .pill { padding: 0 26px 1px 21px; margin-left: 1px; }
.hint svg { margin-left: 10px; }

/* dialog */
.dialog { position: absolute; left: 734px; top: 530px; width: 1092px; height: 496px; border-radius: 10px; background: #ececec; box-shadow: 0 0 0 1px rgba(0, 0, 0, .25), 0 44px 90px rgba(0, 0, 0, .56); font-family: "Noto Sans", sans-serif; font-size: 26px; letter-spacing: .4px; }
.d-title { height: 45px; border-radius: 10px 10px 0 0; background: linear-gradient(#eae8ea, #d2d0d2); border-bottom: 2px solid #b3b1b3; display: flex; align-items: center; padding-left: 16px; gap: 16px; letter-spacing: .15px; }
.d-title i { width: 24px; height: 24px; border-radius: 50%; background: #d0ced0; border: 1px solid #b9b7b9; }
.d-title i.red { background: #fc605c; border-color: #df4744; }
.d-title span { flex: 1; text-align: center; color: #3c3a3c; margin: 0 144px 0 8px; }
.d-body { padding: 40px 41px 0; }
.f-row { display: flex; }
.f-row label { width: 267px; text-align: right; margin-right: 17px; line-height: 40px; }
.f-row.name { height: 40px; }
.inp { flex: 1; height: 40px; background: #fff; border: 1px solid #b4b4b4; line-height: 37px; padding-left: 3px; white-space: pre; }
.f-row.size { margin-top: 19px; height: 44px; align-items: center; }
.f-row.size label { margin-right: 16px; letter-spacing: .9px; }
.combo { width: 434px; height: 43px; display: flex; box-shadow: 0 0 0 1px #8fbdee; border-radius: 2px 8px 8px 2px; }
.c-in { flex: 1; background: #fff; border: 2px solid #6fa8e6; border-right: 0; padding-left: 5px; line-height: 38px; display: flex; align-items: center; }
.c-in i { width: 2px; height: 29px; background: #000; }
.c-btn { width: 36px; border-radius: 0 7px 7px 0; background: linear-gradient(#6fb2f8, #177efc); display: flex; align-items: center; justify-content: center; }
.mbtn { height: 40px; line-height: 38px; text-align: center; background: #fff; border-radius: 7px; box-shadow: 0 0 0 1px #cdcdcd, 0 2px 1px rgba(0, 0, 0, .2); }
.sug { width: 263px; margin-left: auto; letter-spacing: .6px; }
.range-l { font-size: 22px; line-height: 30px; margin: 4px 0 0 13px; }
.range { margin: 2px 0 0 0; height: 164px; background: #e3e3e3; border: 1px solid #d6d6d6; border-radius: 6px; display: grid; grid-template-columns: 78px 382px 110px 380px; row-gap: 22px; padding: 30px 0 0 28px; align-content: start; line-height: 40px; }
.range label.c2 { padding-left: 21px; }
.ro { height: 40px; background: #ececec; border: 1px solid #c9c9c9; border-bottom-color: #bdbdbd; text-align: right; padding-right: 8px; line-height: 38px; letter-spacing: .9px; }
.d-foot { display: flex; justify-content: flex-end; gap: 32px; margin-top: 29px; }
.cancel { width: 136px; }
.ok { width: 138px; color: #fff; background: linear-gradient(#6db3fa, #167ffc); box-shadow: 0 0 0 1px #3a8df5, 0 2px 1px rgba(0, 0, 0, .2); }
```
FILE: chart.js
```js
// Bars (count per bin) and the line over them, one panel per continent.
(function () {
  const panels = [
    { name: 'Africa', color: '#4e79a7', counts: { 0: 12, 1: 13, 2: 5, 3: 2, 4: 5, 5: 3, 6: 5, 7: 3, 8: 1, 9: 3 } },
    { name: 'Asia', color: '#f28e2b', counts: { 0: 21, 1: 3, 2: 12, 3: 1, 4: 1, 5: 2, 6: 2, 7: 2, 10: 1, 12: 1 } },
    { name: 'Europe', color: '#e15759', counts: { 0: 2, 1: 1, 4: 3, 5: 3, 6: 1, 7: 5, 8: 1, 9: 2, 10: 6, 11: 12, 12: 7, 13: 1, 14: 1, 15: 1 } },
    { name: 'North America', color: '#76b7b2', counts: { 2: 2, 3: 3, 4: 2, 5: 2, 6: 6, 7: 3, 8: 2, 9: 1, 10: 1, 12: 1 } },
    { name: 'Oceania', color: '#59a14f', counts: { 0: 2, 1: 6, 2: 3, 6: 1, 7: 2, 10: 1, 11: 1 } },
    { name: 'South America', color: '#edc948', counts: { 4: 3, 6: 2, 7: 4, 8: 2, 9: 1 } }
  ];
  const left = 856.5, step = 208, ceil = 393, base = 1356, bin = 11.68;
  const y = v => 1355.5 - v * 41.88;
  const out = [];
  const line = (x1, y1, x2, y2, c, w = 2, extra = '') =>
    out.push(`<line x1="${x1}" y1="${y1}" x2="${x2}" y2="${y2}" stroke="${c}" stroke-width="${w}" ${extra}/>`);
  const text = (x, ty, s, cls, anchor, len) =>
    out.push(`<text x="${x}" y="${ty}" class="${cls}" text-anchor="${anchor}"${len ? ` textLength="${len}"` : ''}>${s}</text>`);

  out.push(`<rect x="752" y="${ceil}" width="104" height="${base - ceil}" fill="#8bc3d1"/>`);
  text(1481, 341, 'Continent', 'c-bold', 'middle', 111);
  for (let v = 2; v <= 22; v += 2) {
    line(left, y(v), 2104, y(v), '#f0f0f0');
    line(845, y(v), 856, y(v), '#333', 2.5);
    line(2106, y(v), 2114, y(v), '#f0f0f0');
  }
  for (let v = 0; v <= 22; v += 2) {
    const ty = v ? y(v) + 9.5 : 1348;
    text(843, ty, v, 'c-lab c-dark', 'end');
    text(2118, ty, v, 'c-lab', 'start');
  }
  const widths = [66, 47, 79, 163, 90, 164];
  panels.forEach((p, i) => {
    const x0 = left + i * step;
    text(x0 + 104, 382, p.name, 'c-lab', 'middle', widths[i]);
    [75.5, 137.5, 201.5].forEach(dx => line(x0 + dx, ceil, x0 + dx, base, '#f0f0f0'));
    line(x0 + 11.5, ceil, x0 + 11.5, base, '#c4c4c4', 2, 'stroke-dasharray="5 3"');
    const bars = Object.entries(p.counts).map(([k, v]) => [x0 + 12.4 + k * bin, v]);
    bars.forEach(([x, v]) => {
      out.push(`<rect x="${x - 1}" y="${y(v) - 1}" width="12.6" height="${base - y(v)}" fill="#d3d3d3"/>`);
      out.push(`<rect x="${x}" y="${y(v) + 1}" width="10.3" height="${base - y(v) - 2}" fill="${p.color}"/>`);
    });
    out.push(`<polyline points="${bars.map(([x, v]) => `${x},${y(v)}`).join(' ')}" fill="none" stroke="${p.color}" stroke-width="5" stroke-linejoin="round" stroke-linecap="round"/>`);
    ['0', '5', '10'].forEach((s, j) => text(x0 + [11.5, 75.5, 138][j], 1396, s, 'c-lab', 'middle'));
    text(x0 + 204, 1396, '15', 'c-lab', 'end');
    [11.5, 75.5, 137.5, 201.5].forEach(dx => line(x0 + dx, 1358, x0 + dx, 1366, '#f0f0f0'));
    text(x0 + 103, 1444, 'drink choice\u00a0 (bin)', 'c-bold', 'middle', 198);
  });
  for (let i = 0; i <= 6; i++) line(left + i * step, 351, left + i * step, 1465, '#c8c8c8', i ? 2 : 1);
  line(752, ceil, 2104, ceil, '#c8c8c8', 1.5);
  line(752, base, 2208, base, '#cacaca', 2.5);
  document.getElementById('chart').innerHTML = out.join('');
})();
```
